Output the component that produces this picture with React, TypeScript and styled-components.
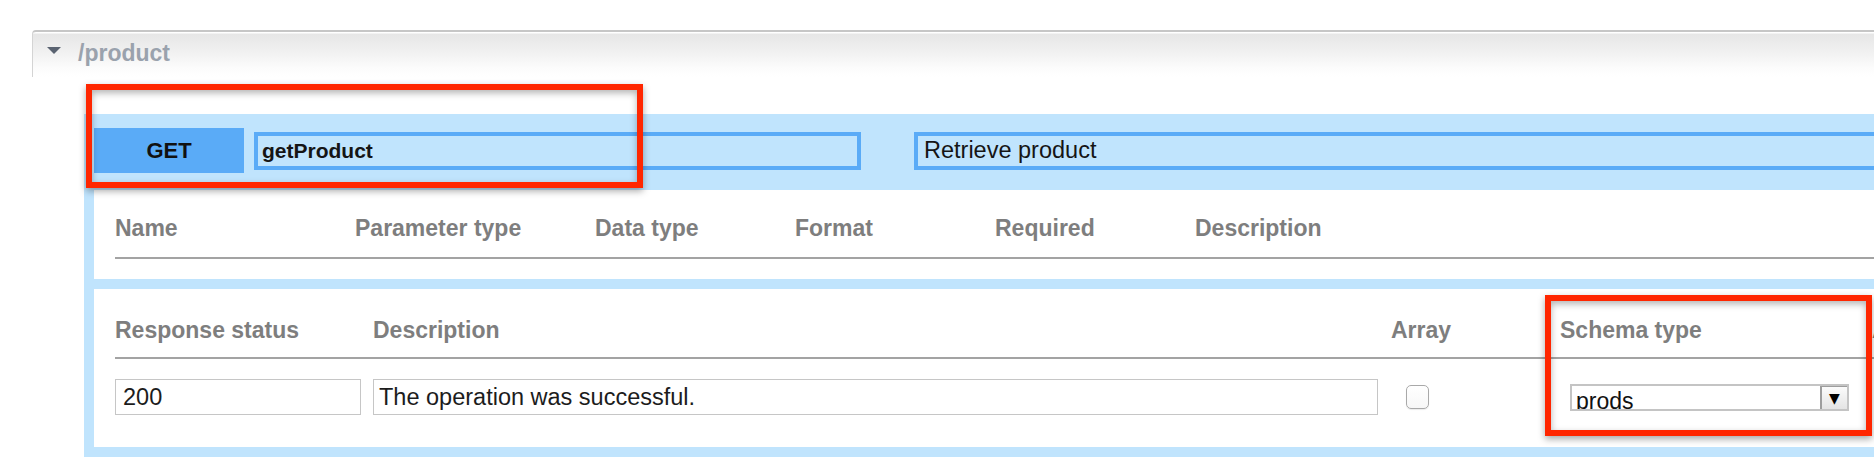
import React from "react";
import styled, { createGlobalStyle } from "styled-components";

const GlobalStyle = createGlobalStyle`
  html, body {
    margin: 0;
    padding: 0;
    background: #ffffff;
    overflow: hidden;
  }
  body {
    font-family: "Liberation Sans", Arial, Helvetica, sans-serif;
  }
  * { box-sizing: border-box; }
`;

const Page = styled.div`
  position: relative;
  width: 1874px;
  height: 468px;
  overflow: hidden;
  padding: 30px 0 0 32px;
  background: #ffffff;
`;

const ResourceHeader = styled.div`
  display: flex;
  align-items: flex-start;
  height: 47px;
  padding-left: 14px;
  border-top: 2px solid #c6c6c6;
  border-left: 1px solid #d4d4d4;
  border-top-left-radius: 4px;
  background: linear-gradient(
    to bottom,
    #ffffff 0px,
    #ffffff 1px,
    #e6e6e6 2px,
    #f1f1f1 45%,
    #fcfcfc 80%,
    #ffffff 100%
  );
`;

const Caret = styled.span`
  width: 0;
  height: 0;
  margin-top: 15px;
  border-left: 7px solid transparent;
  border-right: 7px solid transparent;
  border-top: 7px solid #5a6371;
`;

const ResourcePath = styled.span`
  margin-left: 17px;
  margin-top: 8px;
  font-size: 23px;
  line-height: 27px;
  font-weight: 700;
  color: #9aa2ad;
`;

const OperationPanel = styled.div`
  margin: 37px 0 0 52px;
  padding: 14px 0 10px 10px;
  background: #c0e4fd;
  display: flex;
  flex-direction: column;
`;

const TopRow = styled.div`
  display: flex;
  align-items: center;
  height: 45px;
`;

const MethodButton = styled.div`
  flex: 0 0 150px;
  height: 45px;
  display: flex;
  align-items: center;
  justify-content: center;
  background: #5aabf7;
  color: #111111;
  font-size: 22px;
  font-weight: 700;
`;

const OpField = styled.div<{ $width: number; $gap: number; $bold?: boolean }>`
  flex: 0 0 ${(p) => p.$width}px;
  margin-left: ${(p) => p.$gap}px;
  height: 38px;
  border: 4px solid #5aabf7;
  background: #c0e4fd;
  display: flex;
  align-items: center;
  padding-left: ${(p) => (p.$bold ? 4 : 6)}px;
  font-size: ${(p) => (p.$bold ? 21 : 23.5)}px;
  font-weight: ${(p) => (p.$bold ? 700 : 400)};
  color: #151515;
  white-space: nowrap;
`;

const Section = styled.div<{ $top: number; $bottom: number; $gapAbove: number }>`
  margin-top: ${(p) => p.$gapAbove}px;
  padding: ${(p) => p.$top}px 0 ${(p) => p.$bottom}px 21px;
  background: #ffffff;
`;

const HeaderRow = styled.div<{ $cols: string; $below: number }>`
  display: grid;
  grid-template-columns: ${(p) => p.$cols};
  padding-bottom: ${(p) => p.$below}px;
  border-bottom: 2px solid #a3a3a3;
`;

const HeaderCell = styled.div`
  font-size: 23px;
  line-height: 28px;
  font-weight: 700;
  color: #7e7e7e;
  white-space: nowrap;
`;

const DataRow = styled.div<{ $cols: string }>`
  display: grid;
  grid-template-columns: ${(p) => p.$cols};
  align-items: center;
  margin-top: 20px;
  height: 36px;
`;

const TextField = styled.div<{ $width: number; $pad: number }>`
  width: ${(p) => p.$width}px;
  height: 36px;
  border: 1px solid #c6c6c6;
  background: #ffffff;
  display: flex;
  align-items: center;
  padding-left: ${(p) => p.$pad}px;
  font-size: 23.5px;
  color: #1c1c1c;
  white-space: nowrap;
`;

const CheckBox = styled.div`
  margin-left: 15px;
  width: 23px;
  height: 24px;
  border: 1.5px solid #a9a9a9;
  border-radius: 5px;
  background: linear-gradient(#ffffff, #f7f7f7);
  box-shadow: 0 1px 1px rgba(0, 0, 0, 0.08);
`;

const SelectBox = styled.div`
  margin-left: 10px;
  width: 279px;
  height: 27px;
  border: 2px solid #c4c4c4;
  background: #ffffff;
  display: flex;
  overflow: hidden;
`;

const SelectValue = styled.div`
  flex: 1;
  padding: 4px 0 0 4px;
  font-size: 23px;
  line-height: 23px;
  color: #111111;
  overflow: hidden;
`;

const SelectArrow = styled.div`
  flex: 0 0 27px;
  border-left: 2px solid #9d9d9d;
  border-top: 1px solid #9d9d9d;
  background: linear-gradient(#fbfbfb, #e4e4e4);
  display: flex;
  align-items: center;
  justify-content: center;
  font-size: 14px;
  color: #000000;
  font-family: "DejaVu Sans", sans-serif;
`;

const Annotation = styled.div`
  position: absolute;
  border: 6px solid #ff2600;
  box-shadow: 0 3px 7px rgba(0, 0, 0, 0.35), inset 0 3px 7px rgba(0, 0, 0, 0.3);
  pointer-events: none;
`;

const paramCols = "240px 240px 200px 200px 200px auto";
const respCols = "258px 1018px 169px 312px auto";

export default function App() {
  return (
    <>
      <GlobalStyle />
      <Page>
        <ResourceHeader>
          <Caret />
          <ResourcePath>/product</ResourcePath>
        </ResourceHeader>

        <OperationPanel>
          <TopRow>
            <MethodButton>GET</MethodButton>
            <OpField $width={607} $gap={10} $bold>
              getProduct
            </OpField>
            <OpField $width={1100} $gap={53}>
              Retrieve product
            </OpField>
          </TopRow>

          <Section $top={24} $bottom={20} $gapAbove={17}>
            <HeaderRow $cols={paramCols} $below={15}>
              <HeaderCell>Name</HeaderCell>
              <HeaderCell>Parameter type</HeaderCell>
              <HeaderCell>Data type</HeaderCell>
              <HeaderCell>Format</HeaderCell>
              <HeaderCell>Required</HeaderCell>
              <HeaderCell>Description</HeaderCell>
            </HeaderRow>
          </Section>

          <Section $top={27} $bottom={32} $gapAbove={10}>
            <HeaderRow $cols={respCols} $below={13}>
              <HeaderCell>Response status</HeaderCell>
              <HeaderCell>Description</HeaderCell>
              <HeaderCell>Array</HeaderCell>
              <HeaderCell>Schema type</HeaderCell>
              <HeaderCell>Actions</HeaderCell>
            </HeaderRow>
            <DataRow $cols={respCols}>
              <TextField $width={246} $pad={7}>
                200
              </TextField>
              <TextField $width={1005} $pad={5}>
                The operation was successful.
              </TextField>
              <CheckBox />
              <SelectBox>
                <SelectValue>prods</SelectValue>
                <SelectArrow>▼</SelectArrow>
              </SelectBox>
            </DataRow>
          </Section>
        </OperationPanel>

        <Annotation style={{ left: 86, top: 84, width: 557, height: 104 }} />
        <Annotation style={{ left: 1545, top: 295, width: 327, height: 141 }} />
      </Page>
    </>
  );
}
